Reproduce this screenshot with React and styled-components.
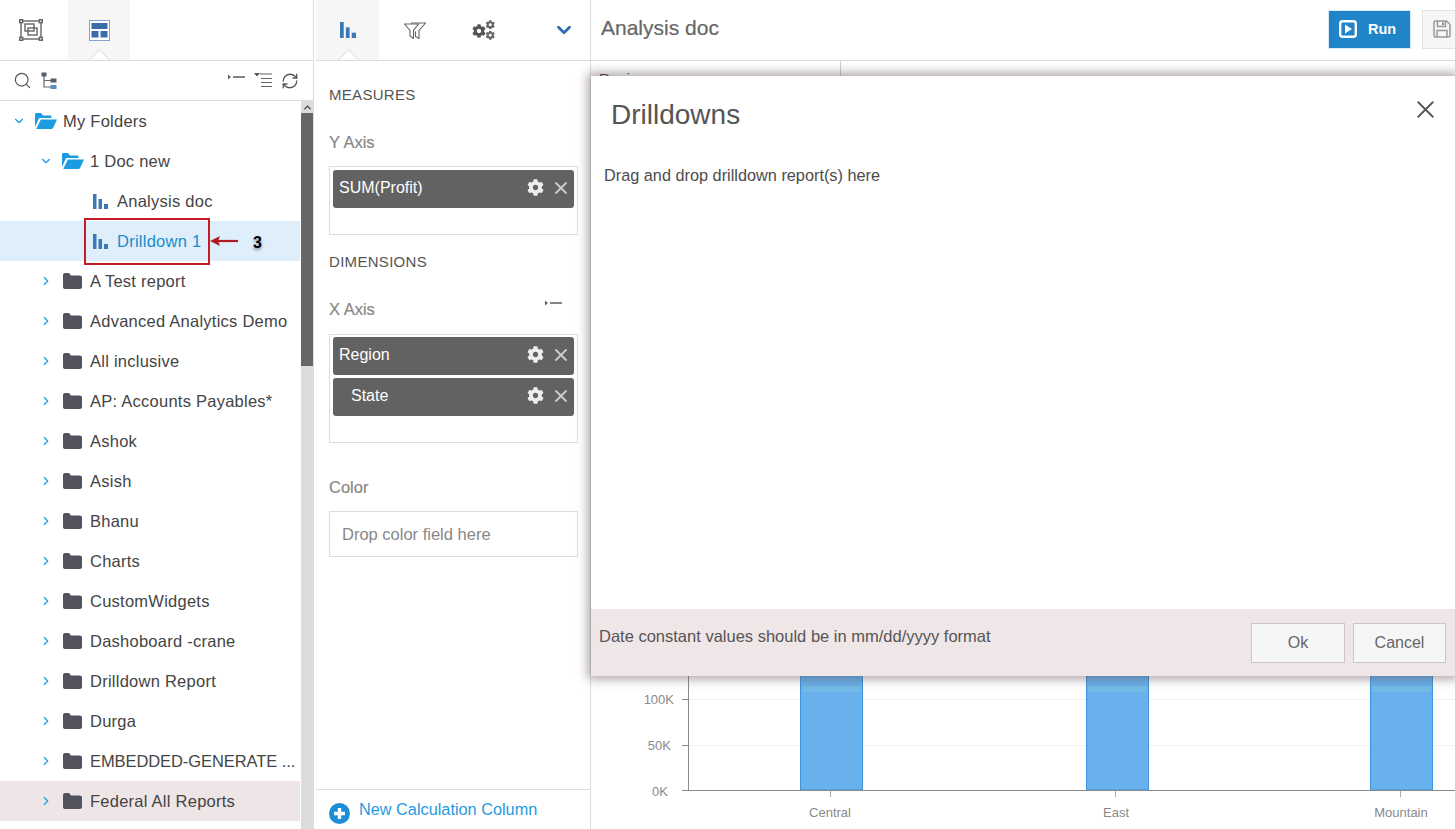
import React from "react";
import styled, { createGlobalStyle } from "styled-components";
import { ChevronDown, ChevronRight, ChevronUp, RefreshCw, Search, X } from "lucide-react";
import { FaCog } from "react-icons/fa";

const GlobalStyle = createGlobalStyle`
  html, body {
    margin: 0;
    padding: 0;
    background: #fff;
    overflow: hidden;
  }
  * { box-sizing: border-box; }
`;

const FOLDERS = [
  "A Test report",
  "Advanced Analytics Demo",
  "All inclusive",
  "AP: Accounts Payables*",
  "Ashok",
  "Asish",
  "Bhanu",
  "Charts",
  "CustomWidgets",
  "Dashoboard -crane",
  "Drilldown Report",
  "Durga",
];

const FolderOpen = () => (
  <svg width="22" height="16" viewBox="0 0 22 16">
    <path d="M0 14V1.500C0 .7.7 0 1.500 0h4.500l2 2.500h7c.8 0 1.500.7 1.500 1.500v1H5.500C4.500 5 3.800 5.500 3.400 6.400z" fill="#1b9be2" />
    <path d="M5.800 6.500H22l-3.800 8.300c-.2.500-.7 1.200-1.500 1.200H1.300z" fill="#1b9be2" />
  </svg>
);

const FolderClosed = () => (
  <svg width="19" height="16" viewBox="0 0 19 16">
    <path d="M0 2C0 .9.9 0 2 0h4l2 2.500h9c1.100 0 2 .9 2 2V14c0 1.100-.9 2-2 2H2c-1.100 0-2-.9-2-2z" fill="#53535e" />
  </svg>
);

const BarsIcon = ({ size = 15 }) => (
  <svg width={size} height={size} viewBox="0 0 15 15" fill="#3b78b8">
    <rect x="0" y="0" width="3.500" height="15" />
    <rect x="5.500" y="5" width="3.500" height="10" />
    <rect x="11" y="10" width="4" height="5" />
  </svg>
);

const SelectIcon = () => (
  <svg width="24" height="22" viewBox="0 0 24 22" fill="none" stroke="#666" strokeWidth="1.400">
    <rect x="2" y="2" width="20" height="18" />
    <rect x="0.700" y="0.700" width="3" height="3" fill="#ddd" />
    <rect x="20.300" y="0.700" width="3" height="3" fill="#ddd" />
    <rect x="0.700" y="18.300" width="3" height="3" fill="#ddd" />
    <rect x="20.300" y="18.300" width="3" height="3" fill="#ddd" />
    <rect x="6" y="5" width="9" height="7" />
    <rect x="9" y="9" width="9" height="7" />
  </svg>
);

const LayoutIcon = () => (
  <svg width="21" height="21" viewBox="0 0 21 21">
    <rect x="0.500" y="0.500" width="20" height="20" fill="#fff" stroke="#7fa5cc" />
    <rect x="2.500" y="3" width="16" height="6" fill="#3b6ea8" />
    <rect x="2.500" y="11" width="7" height="6.500" fill="#3b6ea8" />
    <rect x="11.500" y="11" width="7" height="6.500" fill="#3b6ea8" />
  </svg>
);

const TreeIcon = () => (
  <svg width="16" height="18" viewBox="0 0 16 18" fill="none">
    <path d="M3 3v12h7M3 8.500h7" stroke="#666" strokeWidth="1.200" />
    <rect x="0.500" y="0.500" width="5" height="4" fill="#54606c" />
    <rect x="9.500" y="6.500" width="6" height="4" fill="#54606c" />
    <rect x="9.500" y="13" width="6" height="4" fill="#5a8fc4" />
  </svg>
);

const CollapseIcon = () => (
  <svg width="17" height="6" viewBox="0 0 17 6">
    <path d="M0 0.500l3 2.500-3 2.500z" fill="#666" />
    <rect x="5" y="2.200" width="12" height="1.600" fill="#666" />
  </svg>
);

const ExpandListIcon = () => (
  <svg width="18" height="15" viewBox="0 0 18 15">
    <path d="M0 0h6l-3 3.500z" fill="#555" />
    <path d="M6 1h12M7 5.500h11M7 9.500h11M7 13.500h11" stroke="#666" strokeWidth="1.200" />
  </svg>
);

const FilterIcon = () => (
  <svg width="22" height="18" viewBox="0 0 22 18" fill="none" stroke="#666" strokeWidth="1.100">
    <path d="M7 2h14.500l-6.500 7.500v8l-3.500-2V10.500" />
    <path d="M.5 3h14l-5 6.500v8l-3.500-2.500V9.500z" fill="#fff" />
  </svg>
);

const GearsIcon = () => (
  <svg width="23" height="20" viewBox="0 0 23 20">
    <FaCog x="0" y="4" size={14} color="#555" />
    <FaCog x="13.500" y="0" size={9.500} color="#666" />
    <FaCog x="13.500" y="10.500" size={9.500} color="#666" />
  </svg>
);

const RunIcon = () => (
  <svg width="18" height="18" viewBox="0 0 18 18">
    <rect x="1.200" y="1.200" width="15.600" height="15.600" rx="2.500" fill="none" stroke="#fff" strokeWidth="2.400" />
    <path d="M6 4.500l7 4.500-7 4.500z" fill="#fff" />
  </svg>
);

const SaveIcon = () => (
  <svg width="18" height="18" viewBox="0 0 18 18" fill="none" stroke="#999" strokeWidth="1.500">
    <path d="M1 2.500C1 1.600 1.600 1 2.500 1h11L17 4.500v11c0 .9-.6 1.500-1.500 1.500h-13C1.600 17 1 16.400 1 15.500z" />
    <path d="M4.500 1v5.500h8V1M4 17v-6.500h10V17" />
    <rect x="9" y="2.200" width="2" height="3" fill="#999" stroke="none" />
  </svg>
);

const PlusIcon = () => (
  <svg width="21" height="21" viewBox="0 0 21 21">
    <circle cx="10.500" cy="10.500" r="10.500" fill="#1b8ed8" />
    <path d="M10.500 5v11M5 10.500h11" stroke="#fff" strokeWidth="3.400" />
  </svg>
);

const ArrowAnnotation = () => (
  <svg width="28" height="10" viewBox="0 0 28 10">
    <path d="M4 5h24" stroke="#b01c24" strokeWidth="2.200" />
    <path d="M0 5l10-5-2 5 2 5z" fill="#b01c24" />
  </svg>
);

const BarChart = () => {
  const bars = [800, 1086, 1370];
  return (
    <ChartSvg width="864" height="160" viewBox="591 669 864 160">
      <path d="M688 699.500H1455M688 745.500H1455" stroke="#f1f1f1" />
      {bars.map((x) => (
        <g key={x}>
          <rect x={x + 0.500} y="660" width="62" height="130" fill="#68b1ec" stroke="#3f95dc" />
          <rect x={x + 2} y="686" width="59" height="6" fill="#72bbe6" />
        </g>
      ))}
      <path d="M688.500 660V791M682 699.500h6M682 745.500h6M682 790.500h6M688 790.500H1455" stroke="#8a8a8a" />
      <path d="M830.500 791v6M1115.500 791v6M1400.500 791v6" stroke="#aaa" />
      <ChartLabel x="674" y="704" textAnchor="end">100K</ChartLabel>
      <ChartLabel x="671" y="750" textAnchor="end">50K</ChartLabel>
      <ChartLabel x="668" y="796" textAnchor="end">0K</ChartLabel>
      <ChartLabel x="830" y="817" textAnchor="middle">Central</ChartLabel>
      <ChartLabel x="1116" y="817" textAnchor="middle">East</ChartLabel>
      <ChartLabel x="1401" y="817" textAnchor="middle">Mountain</ChartLabel>
    </ChartSvg>
  );
};

function FieldPill({ label, nested }) {
  return (
    <Pill>
      <PillLabel $nested={nested}>{label}</PillLabel>
      <FaCog size={17} color="#eee" />
      <X size={20} color="#ccc" strokeWidth={2.200} />
    </Pill>
  );
}

function FolderRow({ name, hovered, tight }) {
  return (
    <TreeRow $indent={39} $hovered={hovered} $tight={tight}>
      <Caret>
        <ChevronRight size={14} color="#1b9be2" />
      </Caret>
      <IconSlot $width={28} $left={1}>
        <FolderClosed />
      </IconSlot>
      {name}
    </TreeRow>
  );
}

export default function App() {
  return (
    <Page>
      <GlobalStyle />
      <Sidebar>
        <TabBar>
          <Tab $width={68} $shift={6}>
            <SelectIcon />
          </Tab>
          <Tab $width={62} $active>
            <LayoutIcon />
          </Tab>
        </TabBar>
        <TreeTools>
          <Search size={19} color="#555" strokeWidth={1.500} />
          <TreeIcon />
          <ToolSpacer />
          <RaisedIcon>
            <CollapseIcon />
          </RaisedIcon>
          <RaisedIcon $lift={1}>
            <ExpandListIcon />
          </RaisedIcon>
          <RefreshCw size={18} color="#555" strokeWidth={1.700} />
        </TreeTools>
        <TreeBody>
          <TreeList>
            <TreeRow $indent={12}>
              <Caret>
                <ChevronDown size={14} color="#1b9be2" />
              </Caret>
              <IconSlot $width={28}>
                <FolderOpen />
              </IconSlot>
              My Folders
            </TreeRow>
            <TreeRow $indent={39}>
              <Caret>
                <ChevronDown size={14} color="#1b9be2" />
              </Caret>
              <IconSlot $width={28}>
                <FolderOpen />
              </IconSlot>
              1 Doc new
            </TreeRow>
            <TreeRow $indent={93}>
              <IconSlot $width={24}>
                <BarsIcon />
              </IconSlot>
              Analysis doc
            </TreeRow>
            <TreeRow $indent={93} $selected>
              <IconSlot $width={24}>
                <BarsIcon />
              </IconSlot>
              Drilldown 1
              <Callout />
              <CalloutArrow>
                <ArrowAnnotation />
              </CalloutArrow>
              <CalloutNumber>3</CalloutNumber>
            </TreeRow>
            {FOLDERS.map((name) => (
              <FolderRow key={name} name={name} />
            ))}
            <FolderRow name="EMBEDDED-GENERATE ..." tight />
            <FolderRow name="Federal All Reports" hovered />
          </TreeList>
          <Scrollbar>
            <ScrollButton>
              <ChevronUp size={11} color="#333" strokeWidth={2.500} />
            </ScrollButton>
            <ScrollThumb />
          </Scrollbar>
        </TreeBody>
      </Sidebar>

      <FieldsPanel>
        <TabBar>
          <Tab $width={63} $active>
            <BarsIcon size={16} />
          </Tab>
          <Tab $width={72}>
            <FilterIcon />
          </Tab>
          <Tab $width={64}>
            <GearsIcon />
          </Tab>
          <CollapseButton>
            <ChevronDown size={22} color="#2b6cb0" strokeWidth={3} />
          </CollapseButton>
        </TabBar>
        <FieldsBody>
          <SectionTitle>MEASURES</SectionTitle>
          <AxisLabel>Y Axis</AxisLabel>
          <DropBox $height={69} $pad={3}>
            <FieldPill label="SUM(Profit)" />
          </DropBox>
          <SectionTitle $top={18}>DIMENSIONS</SectionTitle>
          <AxisRow>
            <AxisLabel>X Axis</AxisLabel>
            <CollapseIcon />
          </AxisRow>
          <DropBox $height={109} $pad={2} $top={16}>
            <FieldPill label="Region" />
            <FieldPill label="State" nested />
          </DropBox>
          <AxisLabel $top={36}>Color</AxisLabel>
          <DropField>Drop color field here</DropField>
        </FieldsBody>
        <CalcFooter>
          <PlusIcon />
          <CalcLabel>New Calculation Column</CalcLabel>
        </CalcFooter>
      </FieldsPanel>

      <Workspace>
        <WorkspaceHeader>
          <DocTitle>Analysis doc</DocTitle>
          <RunButton>
            <RunIcon />
            Run
          </RunButton>
          <SaveButton>
            <SaveIcon />
          </SaveButton>
        </WorkspaceHeader>
        <TableHead>Region</TableHead>
        <ChartArea>
          <BarChart />
        </ChartArea>
        <Modal>
          <ModalHead>
            <ModalTitle>Drilldowns</ModalTitle>
            <CloseButton>
              <X size={29} color="#555" strokeWidth={1.500} />
            </CloseButton>
          </ModalHead>
          <ModalBody>Drag and drop drilldown report(s) here</ModalBody>
          <ModalFooter>
            <FooterNote>Date constant values should be in mm/dd/yyyy format</FooterNote>
            <FooterButton $width={94}>Ok</FooterButton>
            <FooterButton $width={93}>Cancel</FooterButton>
          </ModalFooter>
        </Modal>
      </Workspace>
    </Page>
  );
}

const Page = styled.div`
  display: flex;
  width: 1455px;
  height: 829px;
  overflow: hidden;
  font-family: "Liberation Sans", Arial, sans-serif;
  color: #444;
  background: #fff;
`;

const Sidebar = styled.div`
  display: flex;
  flex-direction: column;
  flex: 0 0 314px;
  min-width: 0;
  border-right: 1px solid #dcdcdc;
`;

const TabBar = styled.div`
  display: flex;
  flex: 0 0 61px;
  border-bottom: 1px solid #dcdcdc;
`;

const Tab = styled.div`
  position: relative;
  display: flex;
  align-items: center;
  justify-content: center;
  width: ${(p) => p.$width}px;
  height: 60px;
  padding-right: ${(p) => p.$shift || 0}px;
  background: ${(p) => (p.$active ? "#f6f6f6" : "transparent")};

  ${(p) =>
    p.$active &&
    `
    &::after {
      content: "";
      position: absolute;
      left: 50%;
      bottom: -7px;
      width: 14px;
      height: 14px;
      margin-left: -7px;
      transform: rotate(45deg);
      background: #fff;
      border-left: 1px solid #d4d4d4;
      border-top: 1px solid #d4d4d4;
      clip-path: polygon(0 0, 100% 0, 0 100%);
    }
  `}
`;

const TreeTools = styled.div`
  display: flex;
  align-items: center;
  flex: 0 0 40px;
  gap: 9px;
  padding: 0 14px 0 13px;
  border-bottom: 1px solid #dcdcdc;
`;

const ToolSpacer = styled.div`
  flex: 1;
`;

const RaisedIcon = styled.span`
  display: flex;
  margin-bottom: ${(p) => (p.$lift !== undefined ? p.$lift : 8)}px;
`;

const TreeBody = styled.div`
  display: flex;
  flex: 1;
  min-height: 0;
`;

const TreeList = styled.div`
  flex: 0 0 300px;
  min-width: 0;
`;

const TreeRow = styled.div`
  position: relative;
  display: flex;
  align-items: center;
  height: 40px;
  padding-left: ${(p) => p.$indent}px;
  font-size: 16.500px;
  letter-spacing: ${(p) => (p.$tight ? "-0.08px" : "0.25px")};
  white-space: nowrap;
  color: ${(p) => (p.$selected ? "#1c8bcb" : "#444")};
  background: ${(p) => (p.$selected ? "#deeefb" : p.$hovered ? "#ede5e6" : "transparent")};
`;

const Caret = styled.span`
  display: flex;
  flex: 0 0 14px;
  margin-right: 9px;
`;

const IconSlot = styled.span`
  display: flex;
  flex: 0 0 ${(p) => p.$width}px;
  padding-left: ${(p) => p.$left || 0}px;
`;

const Callout = styled.div`
  position: absolute;
  left: 84px;
  top: -3px;
  width: 126px;
  height: 47px;
  border: 2px solid #c21d24;
`;

const CalloutArrow = styled.div`
  position: absolute;
  left: 210px;
  top: 15px;
  display: flex;
`;

const CalloutNumber = styled.div`
  position: absolute;
  left: 253px;
  top: 13px;
  font-size: 16px;
  font-weight: 700;
  color: #000;
  text-shadow: 0 2px 3px rgba(0, 0, 0, 0.4);
`;

const Scrollbar = styled.div`
  flex: 0 0 12px;
  margin-left: 1px;
  background: #dcdcdc;
`;

const ScrollButton = styled.div`
  display: flex;
  align-items: center;
  justify-content: center;
  height: 12px;
`;

const ScrollThumb = styled.div`
  height: 253px;
  background: #666;
`;

const FieldsPanel = styled.div`
  display: flex;
  flex-direction: column;
  flex: 0 0 277px;
  min-width: 0;
  padding-left: 2px;
  border-right: 1px solid #dcdcdc;
`;

const CollapseButton = styled.div`
  display: flex;
  align-items: center;
  margin-left: auto;
  padding-right: 15px;
`;

const FieldsBody = styled.div`
  flex: 1;
  padding: 25px 12px 0 13px;
`;

const SectionTitle = styled.div`
  margin-top: ${(p) => p.$top || 0}px;
  font-size: 15px;
  letter-spacing: 0.3px;
  line-height: 17px;
  color: #555;
`;

const AxisLabel = styled.div`
  margin-top: ${(p) => p.$top || 31}px;
  font-size: 16.500px;
  line-height: 17px;
  color: #888;
  -webkit-text-stroke: 0.2px #888;
`;

const AxisRow = styled.div`
  display: flex;
  align-items: flex-start;
  justify-content: space-between;
  padding-right: 16px;

  svg {
    margin-top: 30px;
  }
`;

const DropBox = styled.div`
  display: flex;
  flex-direction: column;
  gap: 3px;
  height: ${(p) => p.$height}px;
  margin-top: ${(p) => p.$top || 15}px;
  padding: ${(p) => p.$pad}px 3px;
  border: 1px solid #ddd;
`;

const Pill = styled.div`
  display: flex;
  align-items: center;
  gap: 7px;
  flex: 0 0 38px;
  padding: 0 3px 0 6px;
  border-radius: 3px;
  background: #626262;
  color: #fff;
  font-size: 16px;

  svg {
    margin-bottom: 3px;
  }
`;

const PillLabel = styled.span`
  flex: 1;
  padding-left: ${(p) => (p.$nested ? 12 : 0)}px;
  padding-bottom: 2px;
`;

const DropField = styled.div`
  display: flex;
  align-items: center;
  height: 46px;
  margin-top: 15px;
  padding-left: 12px;
  border: 1px solid #ddd;
  font-size: 16.500px;
  color: #888;
`;

const CalcFooter = styled.div`
  display: flex;
  align-items: center;
  gap: 9px;
  flex: 0 0 40px;
  padding: 4px 0 0 13px;
  border-top: 1px solid #dcdcdc;
  font-size: 16.300px;
  color: #1f9ae0;

  svg {
    margin-top: 4px;
  }
`;

const CalcLabel = styled.span`
  margin-bottom: 4px;
`;

const Workspace = styled.div`
  position: relative;
  display: flex;
  flex-direction: column;
  flex: 1;
  min-width: 0;
`;

const WorkspaceHeader = styled.div`
  display: flex;
  align-items: center;
  flex: 0 0 61px;
  padding: 0 0 2px 10px;
  border-bottom: 1px solid #dcdcdc;
`;

const DocTitle = styled.div`
  flex: 1;
  margin-bottom: 2px;
  font-size: 21px;
  color: #666;
  -webkit-text-stroke: 0.2px #666;
`;

const RunButton = styled.div`
  display: flex;
  align-items: center;
  gap: 11px;
  width: 83px;
  height: 39px;
  margin-right: 11px;
  padding-left: 10px;
  background: #1f84c8;
  border: 1px solid #d8e8f4;
  color: #fff;
  font-size: 14.500px;
  font-weight: 700;
`;

const SaveButton = styled.div`
  display: flex;
  align-items: center;
  justify-content: flex-start;
  width: 33px;
  height: 39px;
  padding-left: 10px;
  background: #f6f6f6;
  border: 1px solid #e2e2e2;
  border-right: 0;
`;

const TableHead = styled.div`
  width: 250px;
  height: 28px;
  padding: 9px 0 0 8px;
  border-right: 1px solid #ccc;
  font-size: 15px;
  color: #444;
`;

const ChartArea = styled.div`
  display: flex;
  align-items: flex-end;
  flex: 1;
  min-height: 0;
`;

const ChartSvg = styled.svg`
  display: block;
`;

const ChartLabel = styled.text`
  font-family: "Liberation Sans", Arial, sans-serif;
  font-size: 13px;
  fill: #8a8a8a;
`;

const Modal = styled.div`
  position: absolute;
  left: 0;
  top: 76px;
  right: 0;
  height: 600px;
  display: flex;
  flex-direction: column;
  background: #fff;
  box-shadow: 0 0 10px 3px rgba(90, 70, 80, 0.5);
`;

const ModalHead = styled.div`
  display: flex;
  align-items: center;
  justify-content: space-between;
  flex: 0 0 76px;
  padding: 2px 15px 0 20px;
`;

const ModalTitle = styled.div`
  font-size: 28px;
  color: #555;
`;

const CloseButton = styled.div`
  display: flex;
  margin-bottom: 12px;
`;

const ModalBody = styled.div`
  flex: 1;
  padding: 14px 13px;
  font-size: 16.300px;
  color: #4c4c4c;
`;

const ModalFooter = styled.div`
  display: flex;
  align-items: center;
  gap: 8px;
  flex: 0 0 67px;
  padding: 0 9px 0 8px;
  background: #efe6e7;
`;

const FooterNote = styled.div`
  flex: 1;
  margin-bottom: 13px;
  font-size: 16.500px;
  color: #555;
`;

const FooterButton = styled.div`
  display: flex;
  align-items: center;
  justify-content: center;
  width: ${(p) => p.$width}px;
  height: 40px;
  margin-top: 1px;
  background: #f6f6f6;
  border: 1px solid #ccc5c6;
  font-size: 16px;
  color: #666;
`;
